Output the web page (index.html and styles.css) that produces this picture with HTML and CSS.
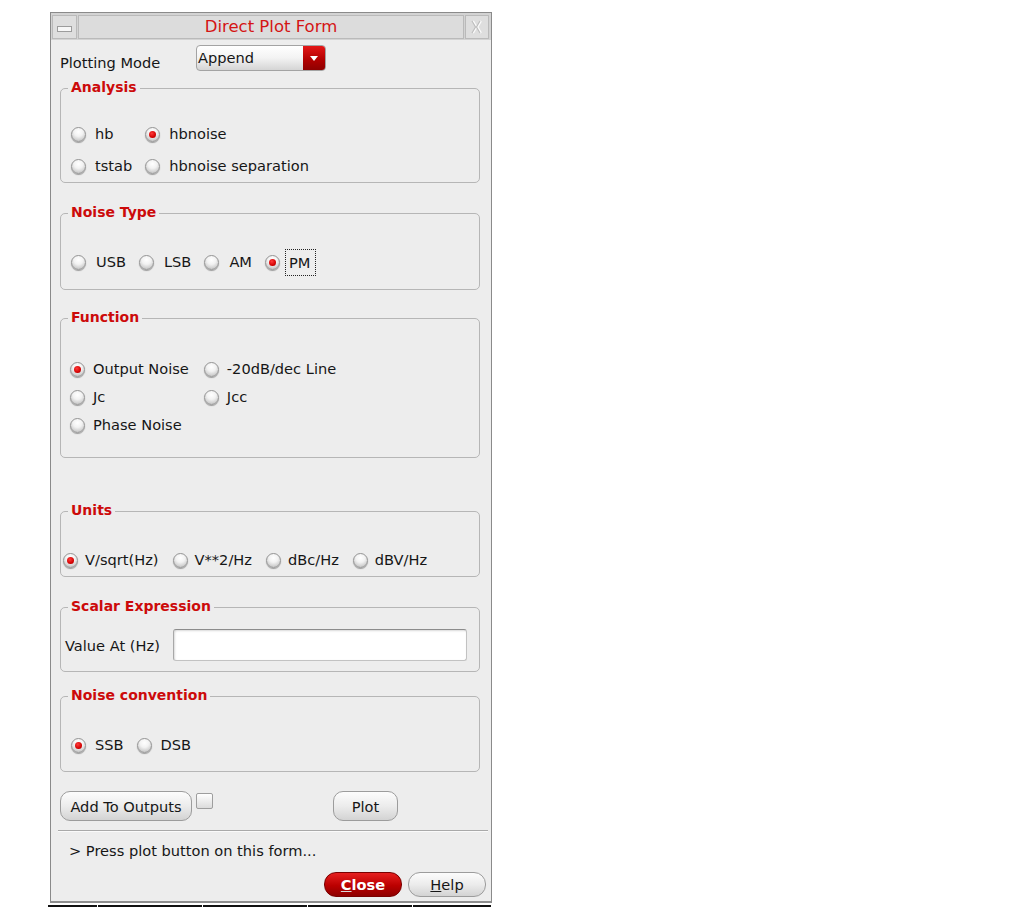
FILE: index.html
```html
<!DOCTYPE html>
<html>
<head>
  <meta charset="UTF-8">
  <title>Direct Plot Form</title>
  <link rel="stylesheet" href="styles.css">
</head>
<body>
  <div class="window">
    <div class="titlebar">
      <div class="tb-btn"><span class="min-icon"></span></div>
      <div class="tb-title">Direct Plot Form</div>
      <div class="tb-btn tb-close">
        <svg width="22" height="22" viewBox="0 0 22 22">
          <path d="M7 5 L10.5 11 L7 17 M15 5 L11.5 11 L15 17" fill="none" stroke="#fbfbfb" stroke-width="2"/>
          <path d="M6 5 L9.5 11 L6 17 M14 5 L10.5 11 L14 17" fill="none" stroke="#bdbdbd" stroke-width="1.2"/>
        </svg>
      </div>
    </div>

    <div class="form">
      <div class="mode-row">
        <span class="mode-label">Plotting Mode</span>
        <div class="combo">
          <span class="combo-text">Append</span>
          <span class="combo-arrow"></span>
        </div>
      </div>

      <!-- analysis type -->
      <div class="group analysis">
        <span class="group-title">Analysis</span>
        <div class="opts">
          <div class="radio"><span class="knob"></span>hb</div>
          <div class="radio"><span class="knob on"></span>hbnoise</div>
          <div class="radio"><span class="knob"></span>tstab</div>
          <div class="radio"><span class="knob"></span>hbnoise separation</div>
        </div>
      </div>

      <div class="group noise-type">
        <span class="group-title">Noise Type</span>
        <div class="opts">
          <div class="radio"><span class="knob"></span>USB</div>
          <div class="radio"><span class="knob"></span>LSB</div>
          <div class="radio"><span class="knob"></span>AM</div>
          <div class="radio focused"><span class="knob on"></span><span class="focus">PM</span></div>
        </div>
      </div>

      <div class="group function">
        <span class="group-title">Function</span>
        <div class="opts">
          <div class="radio"><span class="knob on"></span>Output Noise</div>
          <div class="radio"><span class="knob"></span>-20dB/dec Line</div>
          <div class="radio"><span class="knob"></span>Jc</div>
          <div class="radio"><span class="knob"></span>Jcc</div>
          <div class="radio"><span class="knob"></span>Phase Noise</div>
        </div>
      </div>

      <div class="group units">
        <span class="group-title">Units</span>
        <div class="opts">
          <div class="radio"><span class="knob on"></span>V/sqrt(Hz)</div>
          <div class="radio"><span class="knob"></span>V**2/Hz</div>
          <div class="radio"><span class="knob"></span>dBc/Hz</div>
          <div class="radio"><span class="knob"></span>dBV/Hz</div>
        </div>
      </div>

      <div class="group scalar">
        <span class="group-title">Scalar Expression</span>
        <div class="value-row">
          <span class="value-label">Value At (Hz)</span>
          <div class="value-input"></div>
        </div>
      </div>

      <div class="group convention">
        <span class="group-title">Noise convention</span>
        <div class="opts">
          <div class="radio"><span class="knob on"></span>SSB</div>
          <div class="radio"><span class="knob"></span>DSB</div>
        </div>
      </div>

      <div class="actions">
        <button class="btn btn-add">Add To Outputs</button>
        <span class="check"></span>
        <button class="btn btn-plot">Plot</button>
      </div>

      <div class="separator"></div>

      <div class="status">&gt; Press plot button on this form...</div>

      <div class="footer">
        <button class="btn btn-close"><u>C</u>lose</button>
        <button class="btn btn-help"><u>H</u>elp</button>
      </div>
    </div>
  </div>
  <div class="strip">
    <span></span><span></span><span></span><span></span><span></span>
  </div>
</body>
</html>
```

FILE: styles.css
```css
body {
  margin: 0;
  background-color: #ffffff;
  font-family: "DejaVu Sans", Verdana, sans-serif;
  font-size: 14.6px;
  color: #161616;
}

.window {
  width: 442px;
  height: 891px;
  margin: 12px 0 0 50px;
  box-sizing: border-box;
  border: 1px solid #8a8a8a;
  border-bottom: 2px solid #8e8e8e;
  background-color: #ededed;
  display: flex;
  flex-direction: column;
}

/* title bar */
.titlebar {
  display: flex;
  gap: 1px;
  height: 27px;
  box-sizing: border-box;
  padding: 2px 2px 1px 1px;
  background-color: #d3d3d3;
}

.tb-btn {
  width: 25px;
  height: 24px;
  box-sizing: border-box;
  border: 1px solid #bababa;
  background-color: #dedede;
  display: flex;
  align-items: center;
  justify-content: center;
  flex-shrink: 0;
}

.tb-close {
  width: 24px;
}

.min-icon {
  width: 13px;
  height: 4px;
  margin-top: 3px;
  border: 1px solid #9c9c9c;
  background-color: #f7f7f7;
}

.tb-title {
  flex: 1;
  height: 24px;
  box-sizing: border-box;
  border: 1px solid #bababa;
  background-color: #dcdcdc;
  color: #d41414;
  font-size: 16.5px;
  line-height: 22px;
  text-align: center;
}

/* form body */
.form {
  padding: 5px 11px 0 9px;
}

.mode-row {
  display: flex;
  height: 26px;
}

.mode-label {
  width: 136px;
  padding-top: 10px;
  line-height: 16px;
}

.combo {
  width: 130px;
  height: 26px;
  box-sizing: border-box;
  border: 1px solid #a3a3a3;
  border-radius: 4px;
  background: linear-gradient(#ffffff, #f3f3f3 50%, #d5d5d5);
  display: flex;
  overflow: hidden;
}

.combo-text {
  flex: 1;
  padding-left: 1px;
  line-height: 23px;
}

.combo-arrow {
  width: 22px;
  background: linear-gradient(#e41616, #b00000 60%, #8e0000);
  display: flex;
  align-items: center;
  justify-content: center;
}

.combo-arrow::after {
  content: "";
  border-left: 4px solid transparent;
  border-right: 4px solid transparent;
  border-top: 5px solid #ffffff;
}

/* group boxes */
.group {
  position: relative;
  box-sizing: border-box;
  border: 1px solid #b6b6b6;
  border-radius: 5px;
}

.group-title {
  position: absolute;
  top: -10px;
  left: 7px;
  padding: 0 3px;
  background-color: #ededed;
  color: #cc0a0a;
  font-size: 14px;
  font-weight: bold;
  line-height: 16px;
}

.analysis {
  margin-top: 17px;
  height: 95px;
  padding: 35px 0 0 10px;
}

.noise-type {
  margin-top: 30px;
  height: 77px;
  padding: 38px 0 0 10px;
}

.function {
  margin-top: 28px;
  height: 140px;
  padding: 40px 0 0 9px;
}

.units {
  margin-top: 53px;
  height: 66px;
  padding: 38px 0 0 2px;
}

.scalar {
  margin-top: 30px;
  height: 65px;
  padding: 21px 12px 0 4px;
}

.convention {
  margin-top: 24px;
  height: 76px;
  padding: 38px 0 0 10px;
}

.analysis .opts {
  display: grid;
  grid-template-columns: auto auto;
  justify-content: start;
  column-gap: 13px;
  row-gap: 12px;
}

.function .opts {
  display: grid;
  grid-template-columns: auto auto;
  justify-content: start;
  column-gap: 15px;
  row-gap: 8px;
}

.noise-type .opts,
.units .opts,
.convention .opts {
  display: flex;
  gap: 13px;
}

.units .opts {
  gap: 14px;
}

/* radio buttons */
.radio {
  display: flex;
  align-items: center;
  height: 20px;
  line-height: 16px;
  white-space: nowrap;
}

.knob {
  width: 15px;
  height: 15px;
  margin-right: 9px;
  box-sizing: border-box;
  border: 1px solid #959595;
  border-radius: 50%;
  background: radial-gradient(circle at 50% 30%, #ffffff 0, #f2f2f2 40%, #c8c8c8 80%, #a9a9a9 100%);
  box-shadow: 0 1px 1px rgba(0,0,0,0.35);
  display: flex;
  align-items: center;
  justify-content: center;
  flex-shrink: 0;
}

.knob.on::after {
  content: "";
  width: 7px;
  height: 7px;
  border-radius: 50%;
  background: radial-gradient(circle at 40% 35%, #ff3a3a, #d00000 65%, #8e0000);
}

.noise-type .knob {
  margin-right: 10px;
}

.function .knob {
  margin-right: 8px;
}

.units .knob {
  margin-right: 7px;
}

.focused .knob {
  margin-right: 5px;
}

.focus {
  border: 1px dotted #222222;
  padding: 5px 5px 4px 3px;
}

/* scalar expression */
.value-row {
  display: flex;
  align-items: center;
}

.value-label {
  width: 108px;
}

.value-input {
  width: 295px;
  height: 32px;
  box-sizing: border-box;
  border: 1px solid #c2c2c2;
  border-top-color: #8c8c8c;
  border-left-color: #a8a8a8;
  border-radius: 3px;
  background-color: #ffffff;
  box-shadow: inset 1px 1px 2px rgba(0,0,0,0.15);
}

/* buttons */
.actions {
  display: flex;
  align-items: flex-start;
  margin-top: 19px;
}

.btn {
  height: 30px;
  box-sizing: border-box;
  padding: 0;
  border: 1px solid #9c9c9c;
  border-radius: 10px;
  background: linear-gradient(#fcfcfc, #ececec 50%, #d3d3d3);
  font-family: "DejaVu Sans", Verdana, sans-serif;
  font-size: 14.6px;
  color: #161616;
  text-align: center;
  white-space: nowrap;
}

.btn-add {
  width: 132px;
}

.check {
  width: 17px;
  height: 16px;
  margin: 2px 0 0 4px;
  box-sizing: border-box;
  border: 1px solid #9e9e9e;
  border-radius: 2px;
  background: linear-gradient(#ffffff, #dcdcdc);
}

.btn-plot {
  width: 65px;
  margin-left: 120px;
}

.separator {
  margin: 9px -8px 0 -2px;
  height: 1px;
  background-color: #a9a9a9;
  border-bottom: 1px solid #fafafa;
}

.status {
  margin-top: 11px;
  padding-left: 9px;
  line-height: 16px;
}

.footer {
  display: flex;
  justify-content: flex-end;
  gap: 6px;
  margin: 13px -6px 0 0;
}

.footer .btn {
  width: 78px;
  height: 25px;
  border-radius: 12px;
}

.btn-close {
  border-color: #7a0000 !important;
  background: linear-gradient(#e62020, #bb0000 55%, #8e0000) !important;
  color: #ffffff !important;
  font-weight: bold;
}

.btn-close u {
  text-decoration-color: #d9d9d9;
}

/* desktop strip under the window */
.strip {
  display: flex;
  gap: 1px;
  width: 444px;
  height: 2px;
  margin: 2px 0 0 48px;
}

.strip span {
  background-color: #111111;
  flex: 104px 0 0;
}

.strip span:first-child {
  flex-basis: 49px;
}

.strip span:last-child {
  flex-basis: 78px;
}
```
